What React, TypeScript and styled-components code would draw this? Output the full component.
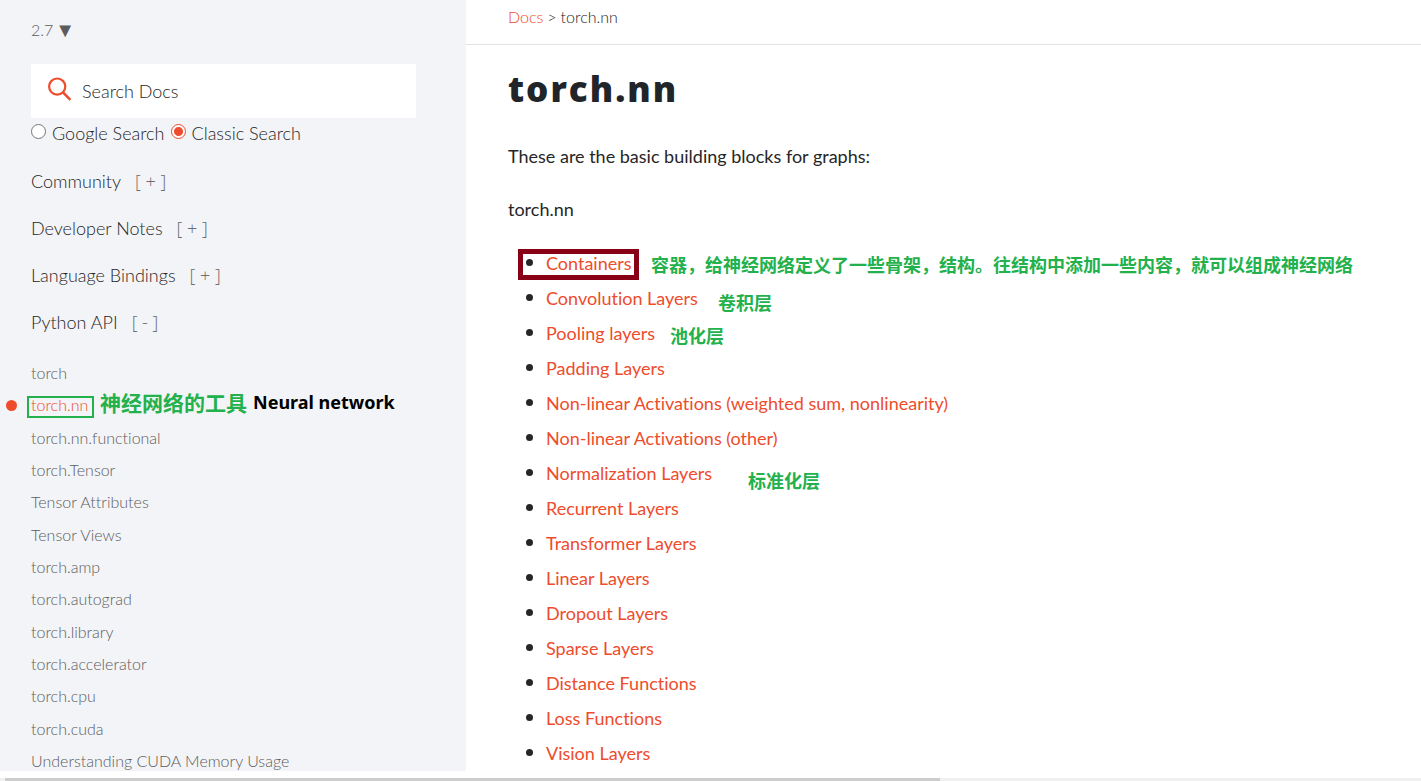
import React from "react";
import styled, { createGlobalStyle } from "styled-components";

const accent = "#ee4c2c";
const noteGreen = "#22b14c";

const GlobalStyle = createGlobalStyle`
  * { box-sizing: border-box; }
  html, body { margin: 0; background: #fff; }
  body {
    font-family: Lato, "Noto Sans CJK SC", sans-serif;
    font-variant-ligatures: none;
    color: #262626;
  }
  a { color: inherit; text-decoration: none; }
  ul { list-style: none; margin: 0; padding: 0; }
`;

const Page = styled.div`
  display: flex;
  flex-direction: column;
  gap: 7px;
  height: 100vh;
  overflow: hidden;
`;

const Columns = styled.div`
  display: flex;
  flex: 1;
  min-height: 0;
`;

const Sidebar = styled.nav`
  display: flex;
  flex-direction: column;
  flex: 0 0 466px;
  padding: 20px 50px 0 31px;
  background: #f3f4f7;
  overflow: hidden;
`;

const Version = styled.a`
  display: flex;
  align-items: center;
  gap: 2px;
  font-size: 16px;
  font-weight: 300;
  line-height: 20px;
  color: #5c5c5e;
`;

const Arrow = styled.span`
  font-family: "DejaVu Sans", sans-serif;
  font-size: 20px;
`;

const SearchBox = styled.label`
  display: flex;
  align-items: center;
  gap: 10px;
  flex: none;
  height: 54px;
  margin-top: 24px;
  padding-left: 17px;
  background: #fff;
`;

const SearchIcon = styled.svg`
  margin-bottom: 4px;
`;

const SearchInput = styled.input`
  flex: 1;
  border: 0;
  padding: 0;
  outline: 0;
  background: none;
  font: 300 18px/24px Lato, sans-serif;
  color: #262626;
  &::placeholder { color: #262626; opacity: 1; }
`;

const SearchModes = styled.div`
  display: flex;
  gap: 6px;
  padding-top: 3px;
`;

const Mode = styled.label`
  display: flex;
  gap: 6px;
  font-size: 18px;
  font-weight: 300;
  line-height: 24px;
`;

const Radio = styled.input`
  appearance: none;
  width: 15px;
  height: 15px;
  margin: 3px 0 0;
  border: 1px solid #767676;
  border-radius: 50%;
  background: #fff;
  &:checked {
    border-color: ${accent};
    background: radial-gradient(circle, ${accent} 4px, #fff 5px);
  }
`;

const Sections = styled.div`
  display: flex;
  flex-direction: column;
  gap: 23px;
  padding-top: 24px;
`;

const Section = styled.button`
  display: flex;
  gap: 14px;
  padding: 0;
  border: 0;
  background: none;
  font: 300 18px/24px Lato, sans-serif;
  color: #262626;
  cursor: pointer;
`;

const Toggle = styled.span`
  font-family: "Open Sans", sans-serif;
  color: #6c6c6d;
`;

const ApiList = styled.ul`
  display: flex;
  flex: 1;
  flex-direction: column;
  justify-content: space-between;
  margin-top: 29px;
`;

const ApiItem = styled.li<{ $current?: boolean }>`
  position: relative;
  font-size: 16px;
  font-weight: 300;
  line-height: 20px;
  color: ${(p) => (p.$current ? accent : "#5c5c5e")};
`;

const Dot = styled.span`
  position: absolute;
  left: -25px;
  top: 5px;
  width: 11px;
  height: 11px;
  border-radius: 50%;
  background: ${accent};
`;

const Frame = styled.span<{ $width: number; $height: number; $stroke: number; $color: string; $left: number; $top: number }>`
  position: absolute;
  left: ${(p) => p.$left}px;
  top: ${(p) => p.$top}px;
  width: ${(p) => p.$width}px;
  height: ${(p) => p.$height}px;
  border: ${(p) => p.$stroke}px solid ${(p) => p.$color};
  pointer-events: none;
`;

const Note = styled.span<{ $left: number; $top: number; $size?: number; $dark?: boolean }>`
  position: absolute;
  left: ${(p) => p.$left}px;
  top: ${(p) => p.$top}px;
  font-family: ${(p) => (p.$dark ? '"Noto Sans"' : '"Noto Sans CJK SC"')}, sans-serif;
  font-size: ${(p) => p.$size ?? 18}px;
  font-weight: 700;
  line-height: 24px;
  white-space: nowrap;
  color: ${(p) => (p.$dark ? "#000" : noteGreen)};
`;

const Main = styled.main`
  flex: 1;
  min-width: 0;
`;

const Breadcrumbs = styled.div`
  display: flex;
  gap: 4px;
  height: 45px;
  padding: 7px 0 0 42px;
  border-bottom: 1px solid #e2e2e2;
  font-size: 16px;
  font-weight: 300;
  line-height: 20px;
`;

const RedLink = styled.a`
  color: ${accent};
`;

const Article = styled.article`
  padding: 23px 0 0 42px;
  font-size: 18px;
  line-height: 24px;
`;

const Title = styled.h1`
  margin: 0 0 34px;
  font-family: "Open Sans", sans-serif;
  font-size: 35px;
  font-weight: 800;
  line-height: 42px;
  letter-spacing: 2px;
  color: #212529;
`;

const Text = styled.p`
  margin: 0 0 29px;
  &:last-of-type { margin-bottom: 24px; }
`;

const Topic = styled.li`
  position: relative;
  display: flex;
  align-items: center;
  gap: 13px;
  height: 35px;
  padding-left: 18px;
  &::before {
    content: "";
    width: 7px;
    height: 7px;
    border-radius: 50%;
    background: #262626;
  }
`;

const ScrollTrack = styled.div`
  flex: none;
  height: 3px;
  padding-left: 5px;
  background: #f0f0f0;
`;

const ScrollThumb = styled.div`
  width: 66%;
  height: 3px;
  background: #cdcdcd;
`;

const sections = [
  ["Community", "[ + ]"],
  ["Developer Notes", "[ + ]"],
  ["Language Bindings", "[ + ]"],
  ["Python API", "[ - ]"],
];

const apis = [
  "torch",
  "torch.nn",
  "torch.nn.functional",
  "torch.Tensor",
  "Tensor Attributes",
  "Tensor Views",
  "torch.amp",
  "torch.autograd",
  "torch.library",
  "torch.accelerator",
  "torch.cpu",
  "torch.cuda",
  "Understanding CUDA Memory Usage",
];

type TopicData = { name: string; framed?: boolean; note?: { text: string; left: number; top: number } };

const topics: TopicData[] = [
  {
    name: "Containers",
    framed: true,
    note: { text: "容器，给神经网络定义了一些骨架，结构。往结构中添加一些内容，就可以组成神经网络", left: 143, top: 7 },
  },
  { name: "Convolution Layers", note: { text: "卷积层", left: 210, top: 10 } },
  { name: "Pooling layers", note: { text: "池化层", left: 162, top: 8 } },
  { name: "Padding Layers" },
  { name: "Non-linear Activations (weighted sum, nonlinearity)" },
  { name: "Non-linear Activations (other)" },
  { name: "Normalization Layers", note: { text: "标准化层", left: 240, top: 13 } },
  { name: "Recurrent Layers" },
  { name: "Transformer Layers" },
  { name: "Linear Layers" },
  { name: "Dropout Layers" },
  { name: "Sparse Layers" },
  { name: "Distance Functions" },
  { name: "Loss Functions" },
  { name: "Vision Layers" },
];

export default function App() {
  return (
    <Page>
      <GlobalStyle />
      <Columns>
        <Sidebar>
          <Version href="#versions">
            2.7 <Arrow>▼</Arrow>
          </Version>
          <SearchBox>
            <SearchIcon width="24" height="24" viewBox="0 0 24 24" fill="none" stroke={accent} strokeWidth="2.2" aria-hidden="true">
              <circle cx="9.2" cy="9.6" r="8.1" />
              <path d="M15 15.4L22.4 22.8" strokeWidth="2.6" />
            </SearchIcon>
            <SearchInput type="text" placeholder="Search Docs" aria-label="Search Docs" />
          </SearchBox>
          <SearchModes>
            <Mode>
              <Radio type="radio" name="mode" />
              Google Search
            </Mode>
            <Mode>
              <Radio type="radio" name="mode" defaultChecked />
              Classic Search
            </Mode>
          </SearchModes>
          <Sections>
            {sections.map(([name, toggle]) => (
              <Section key={name} type="button">
                {name}
                <Toggle>{toggle}</Toggle>
              </Section>
            ))}
          </Sections>
          <ApiList>
            {apis.map((name) => {
              const current = name === "torch.nn";
              return (
                <ApiItem key={name} $current={current}>
                  <a href={`#${name}`}>{name}</a>
                  {current && (
                    <>
                      <Dot />
                      <Frame $left={-4} $top={1} $width={67} $height={22} $stroke={2} $color={noteGreen} />
                      <Note $left={69} $top={-5} $size={21}>神经网络的工具</Note>
                      <Note $left={222} $top={-5} $dark>Neural network</Note>
                    </>
                  )}
                </ApiItem>
              );
            })}
          </ApiList>
        </Sidebar>
        <Main>
          <Breadcrumbs>
            <RedLink href="#docs">Docs</RedLink>
            <span>&gt;</span>
            <span>torch.nn</span>
          </Breadcrumbs>
          <Article>
            <Title>torch.nn</Title>
            <Text>These are the basic building blocks for graphs:</Text>
            <Text>torch.nn</Text>
            <ul>
              {topics.map(({ name, framed, note }) => (
                <Topic key={name}>
                  <RedLink href={`#${name}`}>{name}</RedLink>
                  {framed && <Frame $left={10} $top={4} $width={121} $height={31} $stroke={5} $color="#880015" />}
                  {note && (
                    <Note $left={note.left} $top={note.top}>
                      {note.text}
                    </Note>
                  )}
                </Topic>
              ))}
            </ul>
          </Article>
        </Main>
      </Columns>
      <ScrollTrack>
        <ScrollThumb />
      </ScrollTrack>
    </Page>
  );
}
